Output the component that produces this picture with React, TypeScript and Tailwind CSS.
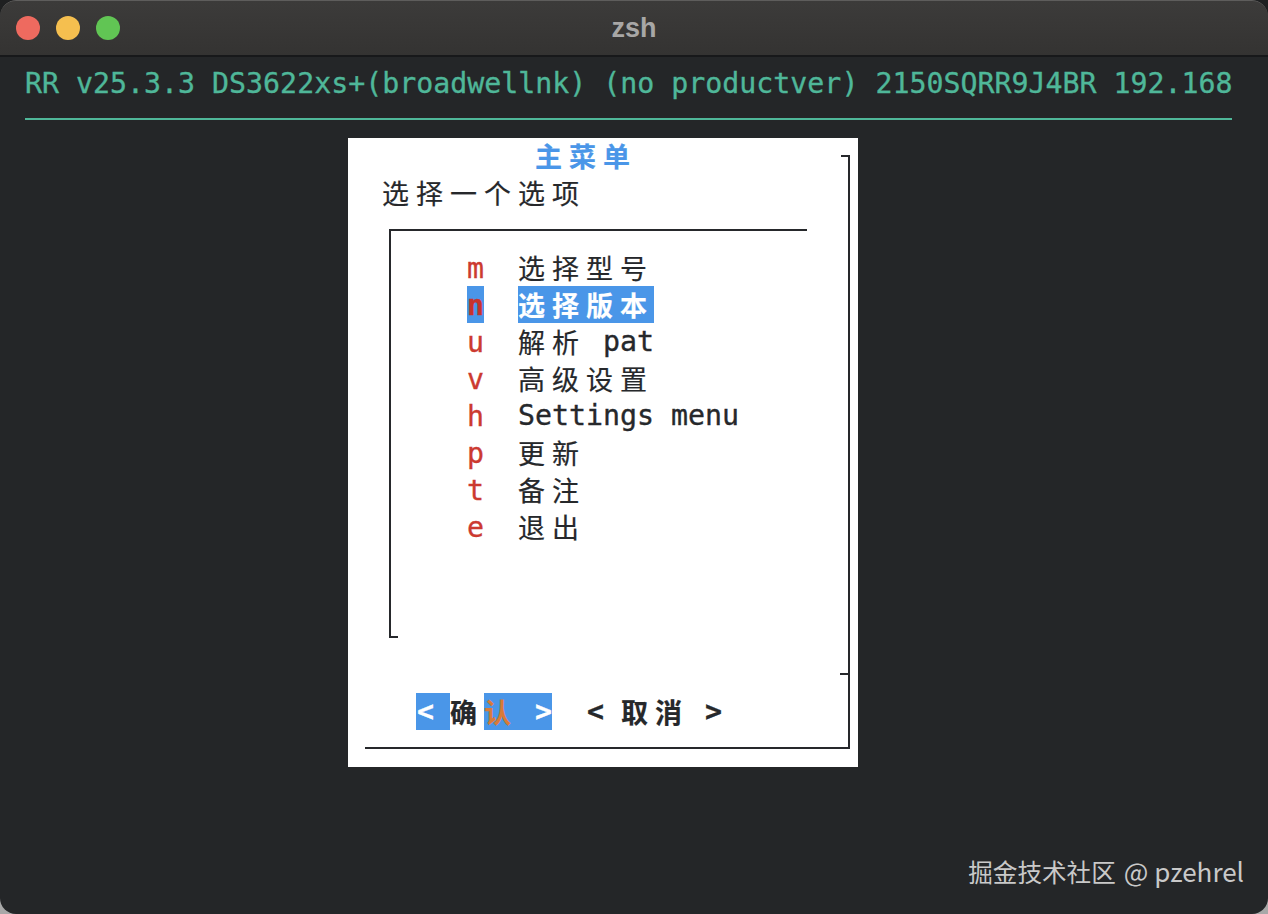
const mono = 'font-["DejaVu_Sans_Mono",monospace] text-[28.25px] [-webkit-text-stroke:0.35px]';
const cjk = 'font-["Noto_Sans_CJK_SC",sans-serif] text-[27px] tracking-[7px] [-webkit-text-stroke:0.2px]';

const rows = [
  { key: 'm', cn: '选择型号' },
  { key: 'n', cn: '选择版本', active: true },
  { key: 'u', cn: '解析', en: '\u00a0pat' },
  { key: 'v', cn: '高级设置' },
  { key: 'h', en: 'Settings menu' },
  { key: 'p', cn: '更新' },
  { key: 't', cn: '备注' },
  { key: 'e', cn: '退出' },
];

function MenuRow({ row }: { row: (typeof rows)[number] }) {
  return (
    <div className="flex h-[37px] items-stretch">
      <span className={`ml-[76px] flex w-[17px] items-center justify-center pt-[3px] ${mono} ${row.active ? 'bg-[#4a96e8] font-bold text-[#c8322c]' : 'text-[#cc3a30]'}`}>
        {row.key}
      </span>
      <span className={`ml-[34px] flex items-center pt-[2px] ${row.active ? 'bg-[#4a96e8] font-bold text-white' : 'text-[#26282b]'}`}>
        {row.cn && <span className={`${cjk} ${row.active ? 'font-bold' : ''}`}>{row.cn}</span>}
        {row.en && <span className={mono}>{row.en}</span>}
      </span>
    </div>
  );
}

export default function App() {
  return (
    <div className="h-[914px] w-[1268px] overflow-hidden bg-gradient-to-b from-[#1f2021] from-60% to-[#a8a8a8] to-95%">
      <div className="relative flex h-full flex-col overflow-hidden rounded-[16px] bg-[#242628]">
        <header className="relative flex h-[57px] shrink-0 items-center gap-4 rounded-t-[16px] border-b-2 border-t border-b-[#17181a] border-t-[#5e5d5c] bg-gradient-to-b from-[#3c3b3a] to-[#343332] px-4">
          <span className="h-6 w-6 rounded-full bg-[#ee6a5f]" />
          <span className="h-6 w-6 rounded-full bg-[#f5bf4f]" />
          <span className="h-6 w-6 rounded-full bg-[#61c554]" />
          <span className='absolute inset-x-0 -top-px text-center font-["Liberation_Sans",sans-serif] text-[27px] font-bold leading-[56px] text-[#a8a7a6]'>zsh</span>
        </header>

        <div className={`ml-[25px] mt-[8px] h-[37px] whitespace-pre leading-[37px] text-[#4fb799] ${mono}`}>
          RR v25.3.3 DS3622xs+(broadwellnk) (no productver) 2150SQRR9J4BR 192.168
        </div>
        <div className="ml-[25px] mt-[16px] h-0.5 w-[1207px] bg-[#4fb799]" />

        <div className="relative ml-[348px] mt-[18px] h-[629px] w-[510px] bg-white">
          <div className={`flex h-[37px] items-center pl-[187px] pb-px font-bold text-[#4a96e8] ${cjk}`}>主菜单</div>
          <div className={`flex h-[37px] items-center pl-[34px] text-[#26282b] ${cjk}`}>选择一个选项</div>

          <div className="relative ml-[41px] mt-[17px] h-[409px] w-[418px] border-l-2 border-t-2 border-[#26282b] pt-[18px]">
            {rows.map((row) => (
              <MenuRow key={row.key} row={row} />
            ))}
            <span className="absolute -left-0.5 bottom-0 h-0.5 w-[9px] bg-[#26282b]" />
          </div>

          <div className={`ml-[68px] mt-[55px] flex h-[37px] items-stretch font-bold text-[#26282b] ${cjk}`}>
            <span className={`flex w-[34px] items-center bg-[#4a96e8] pl-px pt-[2px] text-white ${mono} tracking-normal`}>&lt;</span>
            <span className="flex w-[34px] items-center pt-[2px]">确</span>
            <span className="flex w-[68px] items-center justify-between bg-[#4a96e8] pt-[2px]">
              <span className="text-[#d87a38]">认</span>
              <span className={`text-white ${mono} tracking-normal`}>&gt;</span>
            </span>
            <span className={`ml-[35px] flex w-[34px] items-center pt-[2px] ${mono} tracking-normal`}>&lt;</span>
            <span className="flex w-[68px] items-center pt-[2px]">取消</span>
            <span className={`ml-[16px] flex items-center pt-[2px] ${mono} tracking-normal`}>&gt;</span>
          </div>

          {/* ncurses frame drawn over the dialog */}
          <div className="pointer-events-none absolute left-[17px] top-[17px] h-[594px] w-[485px] border-b-2 border-r-2 border-[#26282b]">
            <span className="absolute -right-0.5 top-0 h-0.5 w-[9px] bg-[#26282b]" />
            <span className="absolute bottom-[72px] right-0 h-0.5 w-[8px] bg-[#26282b]" />
          </div>
        </div>

        <div className='absolute bottom-[24px] right-[24px] flex items-baseline gap-[8px] font-["Noto_Sans_CJK_SC",sans-serif] text-[#c9c9c9]'>
          <span className="text-[24.6px]">掘金技术社区</span>
          <span className="text-[26px]">@ pzehrel</span>
        </div>
      </div>
    </div>
  );
}
